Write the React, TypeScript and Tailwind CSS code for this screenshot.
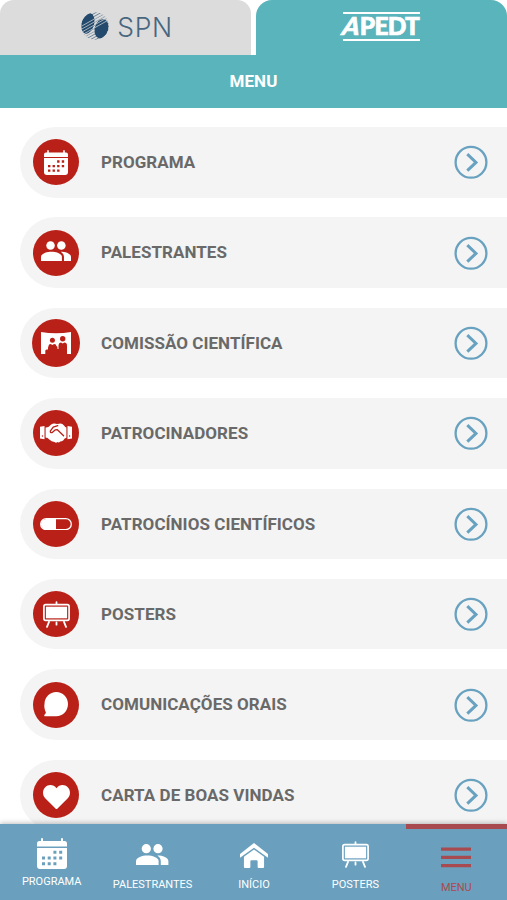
import React from "react";

type IconProps = { className?: string };

const CalendarIcon = ({ className }: IconProps) => (
  <svg viewBox="0 0 30 31" className={className} fill="currentColor">
    <path d="M0 8.6V5.5Q0 3 2.5 3H4V1Q4 0 5 0t1 1v2h18V1q0-1 1-1t1 1v2h1.5Q30 3 30 5.5v3.1z" />
    <path
      fillRule="evenodd"
      d="M0 10h30v18q0 3-3 3H3q-3 0-3-3zM16.4 12.8v3h3v-3zM22.2 12.8v3h3v-3zM5 18.5v3h3v-3zM10.7 18.5v3h3v-3zM16.4 18.5v3h3v-3zM22.2 18.5v3h3v-3zM5 24.2v3h3v-3zM10.7 24.2v3h3v-3zM16.4 24.2v3h3v-3z"
    />
  </svg>
);

const PeopleIcon = ({ className }: IconProps) => (
  <svg viewBox="0 0 32.4 21.4" className={className} fill="currentColor">
    <circle cx="10.3" cy="4.7" r="4.6" />
    <circle cx="22" cy="4.7" r="4.6" />
    <path d="M0 21.4v-4.2c0-3.8 6.4-5.7 11.3-5.7s11.3 1.9 11.3 5.7v4.2z" />
    <path d="M21.3 11.5c5.3 0 11.1 1.9 11.1 5.7v4.2h-7.6v-4.2c0-2.4-1.2-4.3-3.5-5.7z" />
  </svg>
);

const CommitteeIcon = ({ className }: IconProps) => (
  <svg viewBox="0 0 30 22" className={className}>
    <path
      fill="currentColor"
      d="M0 0q15 2.600 30 0v22h-4v-8.500q0-1.500-1.500-1.500h-5.500q-1.500 0-1.500 1.500V17h-1v-1.500q0-1.500-1.500-1.500h-5.500Q7 14 7 15.500V17.500H5.600q-1.300 0-1.300 1.500v3H0z"
    />
    <g fill="#b92018">
      <circle cx="11.4" cy="8.200" r="2.500" />
      <circle cx="21.700" cy="6.800" r="2.700" />
      <path d="M7.500 15v-1q0-2 2.200-2l1.700 1 1.700-1q2.300 0 2.300 2v1zM17.800 13v-.500q0-2 2.200-2l1.700 1 1.700-1q2.400 0 2.400 2v.500z" />
    </g>
  </svg>
);

const HandshakeIcon = ({ className }: IconProps) => (
  <svg viewBox="0 0 32 20" className={className}>
    <g fill="currentColor">
      <path d="M0 3.8 4.5 3v13.200L0 15.600zM32 3.800 27.500 3v13.200l4.500-.6z" />
      <path d="M5.600 4.500q2.800.3 4.700-2.300Q12 .2 14.600.6l2.400.5 3.800-.6q2.200.2 3.400 2.300 1 1.500 2.200 1.700v10.300q-1.900.2-3 2.400-1.500 1.200-3.200 1.200-1.200 1.500-2.700.7-1.500 1.300-3 0-3-.2-5.200-2.600-1.500-1.900-3.700-2z" />
    </g>
    <path
      d="m17.800 2.600-4.600 1.600-2.900 3.900q-.2 2 1.900 1.500l3.200-2.800 2-.1 6.200 6"
      fill="none"
      stroke="#b92018"
      strokeWidth="1.300"
      strokeLinecap="round"
      strokeLinejoin="round"
    />
    <circle cx="2.400" cy="13" r=".7" fill="#b92018" />
    <circle cx="29.600" cy="13" r=".7" fill="#b92018" />
  </svg>
);

const PillIcon = ({ className }: IconProps) => (
  <svg viewBox="0 0 32 12.4" className={className}>
    <rect x=".7" y=".7" width="30.6" height="11" rx="5.5" fill="none" stroke="currentColor" strokeWidth="1.3" />
    <path fill="currentColor" d="M16 1v10.400H6.200a5.200 5.200 0 0 1 0-10.400z" />
  </svg>
);

const PosterIcon = ({ className }: IconProps) => (
  <svg viewBox="0 0 27 27" className={className} stroke="currentColor" fill="none">
    <rect x=".9" y="3.7" width="25.2" height="15.6" rx="1.8" strokeWidth="1.7" />
    <rect x="2.9" y="5.7" width="21.2" height="11.6" fill="currentColor" stroke="none" />
    <path strokeWidth="1.8" strokeLinecap="round" d="M13.500 1.200v1.600M13.500 21.500v2.200M6 20.800l-2 5.100M21 20.800l2 5.100" />
  </svg>
);

const ChatIcon = ({ className }: IconProps) => (
  <svg viewBox="0 0 24 25" className={className} fill="currentColor">
    <path d="M12.300 0C18.800 0 24 5.200 24 12s-5.200 12.300-11.700 12.300H1.500c-1.400 0-1.600-1-.8-1.900l1.200-1.500q-.2-1-.8-2.300A13 13 0 0 1 .5 12C.5 5.200 5.800 0 12.300 0z" />
  </svg>
);

const HeartIcon = ({ className }: IconProps) => (
  <svg viewBox="0 0 27 24.5" className={className} fill="currentColor">
    <path d="M13.500 24.500 2.200 13.200C-.7 10.300-.7 5.200 2.200 2.300c3-3.100 8.300-3.100 11.300.9 3-4 8.300-4 11.300-.9 2.900 2.900 2.900 8 0 10.900z" />
  </svg>
);

const HomeIcon = ({ className }: IconProps) => (
  <svg viewBox="0 0 27 24" className={className} fill="currentColor">
    <path d="M13.500 0 0 10.500V14.200L13.500 4.500 27 14.200v-3.700z" />
    <path d="M13.500 6.200 3.800 13.200V23q0 1 1 1H9q1 0 1-1v-5.500q0-1 1-1h5q1 0 1 1V23q0 1 1 1h4.200q1 0 1-1v-9.800z" />
  </svg>
);

const HamburgerIcon = ({ className }: IconProps) => (
  <svg viewBox="0 0 30 21" className={className} stroke="currentColor" strokeWidth="3.2">
    <path d="M0 2.100h30M0 10.400h30M0 18.700h30" />
  </svg>
);

const ChevronCircle = () => (
  <svg viewBox="0 0 34 34" className="h-[34px] w-[34px] shrink-0" fill="none" stroke="#68a2c0">
    <circle cx="17" cy="17.3" r="15.4" strokeWidth="2.3" />
    <path d="m13.300 9.200 8.700 8.200-8.700 8.200" strokeWidth="3" />
  </svg>
);

const SpnMark = () => (
  <svg viewBox="0 0 28 30" className="h-[30px] w-7">
    <defs>
      <clipPath id="spn-globe">
        <circle cx="14" cy="15" r="13.700" />
      </clipPath>
    </defs>
    <g clipPath="url(#spn-globe)">
      {/* thin meridian hatching behind the two lobes */}
      <path
        stroke="#4b6c88"
        strokeWidth=".8"
        d="M-2 11 30-7M-2 14 30-4M-2 17 30-1M-2 20 30 2M-2 23 30 5M-2 26 30 8M-2 29 30 11M-2 32 30 14M-2 35 30 17M-2 38 30 20M-2 41 30 23M-2 44 30 26"
      />
      <ellipse cx="6.800" cy="12.500" rx="6.300" ry="10.500" fill="#234a6c" transform="rotate(15 6.800 12.500)" />
      <ellipse cx="20.500" cy="17.800" rx="6.800" ry="9.800" fill="#234a6c" transform="rotate(15 20.500 17.800)" />
      <path
        stroke="#dcdcdc"
        strokeWidth=".7"
        d="M0 15.500 14 7.600M0 18.500 14 10.600M0 21.500 14 13.600M0 24.500 14 16.600M0 27.500 14 19.600M14 7.600 28-.3M14 10.600 28 2.700M14 13.600 28 5.700M14 16.600 28 8.700"
      />
    </g>
  </svg>
);

const menuItems = [
  { label: "PROGRAMA", icon: <CalendarIcon className="h-[25px] w-6" /> },
  { label: "PALESTRANTES", icon: <PeopleIcon className="-mt-1 h-5 w-[30px]" /> },
  { label: "COMISSÃO CIENTÍFICA", icon: <CommitteeIcon className="h-[22px] w-[30px]" />, big: true },
  { label: "PATROCINADORES", icon: <HandshakeIcon className="h-5 w-8" /> },
  { label: "PATROCÍNIOS CIENTÍFICOS", icon: <PillIcon className="h-[12.4px] w-8" /> },
  { label: "POSTERS", icon: <PosterIcon className="h-[27px] w-[27px]" /> },
  { label: "COMUNICAÇÕES ORAIS", icon: <ChatIcon className="h-[25px] w-6" /> },
  { label: "CARTA DE BOAS VINDAS", icon: <HeartIcon className="mt-1 h-[24.5px] w-[27px]" /> },
];

const navItems = [
  { label: "PROGRAMA", icon: <CalendarIcon className="h-[31px] w-[30px]" />, pad: "pt-[13.5px] pl-[2px]", gap: "mt-[6.5px]" },
  { label: "PALESTRANTES", icon: <PeopleIcon className="h-[21.4px] w-[32.4px]" />, pad: "pt-[20px] pl-px", gap: "mt-[12.5px]" },
  { label: "INÍCIO", icon: <HomeIcon className="h-[25px] w-7" />, pad: "pt-[18.5px] pl-px", gap: "mt-[10.5px]" },
  { label: "POSTERS", icon: <PosterIcon className="h-[27px] w-[27px]" />, pad: "pt-[17px] pl-px", gap: "mt-[10px]" },
];

export default function App() {
  return (
    <div className="flex h-[900px] w-[507px] flex-col overflow-hidden bg-white font-['Roboto',sans-serif]">
      {/* Tabs */}
      <header className="flex h-[55px] shrink-0 gap-[5px]">
        <div className="flex h-full w-[251px] items-start justify-center gap-2 rounded-t-[14px] bg-[#dcdcdc] pt-[11px] pl-[3px]">
          <SpnMark />
          <span className="font-['Inter',sans-serif] text-[26.5px] leading-[32px] font-light tracking-[0.6px] text-[#48677f]">
            SPN
          </span>
        </div>
        <div className="flex h-full w-[251px] justify-center rounded-t-[16px] bg-[#5ab4bc] pt-3">
          <div className="flex h-[29px] w-[77px] items-center justify-end border-y-[2.5px] border-white pr-px font-['Lato',sans-serif] text-[24.5px] leading-none font-black tracking-[-0.8px] text-white [-webkit-text-stroke:0.7px_white]">
            <span className="inline-block -skew-x-[16deg]">A</span>
            <span>PEDT</span>
          </div>
        </div>
      </header>
      <div className="flex h-[53px] shrink-0 items-center justify-center bg-[#5ab4bc] pt-px text-[17px] font-bold tracking-[0.1px] text-white">
        MENU
      </div>

      {/* Menu list */}
      <main className="flex min-h-0 flex-1 flex-col gap-[19.9px] overflow-hidden pt-[19px] pl-5">
        {menuItems.map((item) => (
          <div
            key={item.label}
            className="flex h-[70.5px] shrink-0 items-center rounded-l-full bg-[#f4f4f4] pr-[19px]"
          >
            <div className="flex w-[72px] shrink-0 justify-center">
              <div
                className={
                  item.big
                    ? "flex h-12 w-12 items-center justify-center rounded-full bg-[#b92018] text-white"
                    : "flex h-[46px] w-[46px] items-center justify-center rounded-full bg-[#b92018] text-white"
                }
              >
                {item.icon}
              </div>
            </div>
            <span className="flex-1 pt-px pl-[9px] text-[17px] font-bold tracking-[0.05px] text-[#696969]">
              {item.label}
            </span>
            <ChevronCircle />
          </div>
        ))}
      </main>

      {/* Bottom navigation */}
      <nav className="z-10 grid h-[76px] shrink-0 grid-cols-5 bg-[#6aa0bd] text-[11px] leading-[13px] text-white shadow-[0_-1px_5px_rgba(0,0,0,0.25)]">
        {navItems.map((item) => (
          <div key={item.label} className={`flex flex-col items-center ${item.pad}`}>
            {item.icon}
            <span className={item.gap}>{item.label}</span>
          </div>
        ))}
        <div className="flex flex-col items-center border-t-[5px] border-[#a84b50] pt-[18px] text-[#a84b50]">
          <HamburgerIcon className="h-[21px] w-[30px]" />
          <span className="mt-[13px]">MENU</span>
        </div>
      </nav>
    </div>
  );
}
